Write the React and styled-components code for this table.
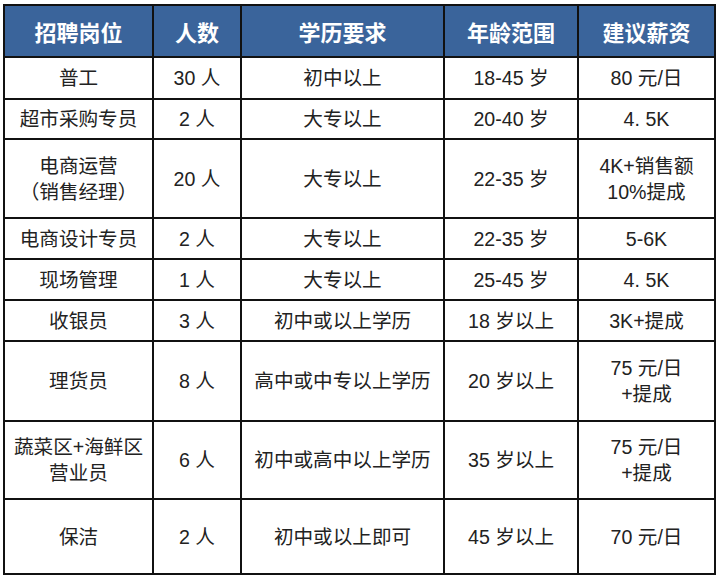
import styled, { createGlobalStyle } from "styled-components";

const GlobalStyle = createGlobalStyle`
  html, body {
    margin: 0;
    padding: 0;
    background: #ffffff;
  }
  body {
    font-family: "Liberation Sans", "Noto Sans CJK SC", sans-serif;
  }
`;

const Page = styled.div`
  padding: 4px 0 0 3px;
`;

const Table = styled.table`
  border-collapse: collapse;
  table-layout: fixed;
  width: 711px;
  color: #222222;
`;

const HeadCell = styled.th`
  background: #3a649b;
  color: #ffffff;
  font-size: 22px;
  font-weight: bold;
  height: 50px;
  padding: 0;
  border: 2px solid #111111;
  text-align: center;
  vertical-align: middle;
`;

const Row = styled.tr`
  height: ${(p) => p.$h}px;
`;

const Cell = styled.td`
  font-size: 19.6px;
  line-height: 26px;
  padding: 0;
  border: 2px solid #111111;
  text-align: center;
  vertical-align: middle;
  white-space: pre-line;
`;

const columns = [
  { title: "招聘岗位", width: 149 },
  { title: "人数", width: 88 },
  { title: "学历要求", width: 203 },
  { title: "年龄范围", width: 134 },
  { title: "建议薪资", width: 137 },
];

const rows = [
  { h: 42, cells: ["普工", "30 人", "初中以上", "18-45 岁", "80 元/日"] },
  { h: 40, cells: ["超市采购专员", "2 人", "大专以上", "20-40 岁", "4. 5K"] },
  { h: 79, cells: ["电商运营\n（销售经理）", "20 人", "大专以上", "22-35 岁", "4K+销售额\n10%提成"] },
  { h: 41, cells: ["电商设计专员", "2 人", "大专以上", "22-35 岁", "5-6K"] },
  { h: 41, cells: ["现场管理", "1 人", "大专以上", "25-45 岁", "4. 5K"] },
  { h: 41, cells: ["收银员", "3 人", "初中或以上学历", "18 岁以上", "3K+提成"] },
  { h: 80, cells: ["理货员", "8 人", "高中或中专以上学历", "20 岁以上", "75 元/日\n+提成"] },
  { h: 78, cells: ["蔬菜区+海鲜区\n营业员", "6 人", "初中或高中以上学历", "35 岁以上", "75 元/日\n+提成"] },
  { h: 75, cells: ["保洁", "2 人", "初中或以上即可", "45 岁以上", "70 元/日"] },
];

export default function App() {
  return (
    <Page>
      <GlobalStyle />
      <Table>
        <colgroup>
          {columns.map((c) => (
            <col key={c.title} style={{ width: c.width }} />
          ))}
        </colgroup>
        <thead>
          <tr>
            {columns.map((c) => (
              <HeadCell key={c.title}>{c.title}</HeadCell>
            ))}
          </tr>
        </thead>
        <tbody>
          {rows.map((r, i) => (
            <Row key={i} $h={r.h}>
              {r.cells.map((text, j) => (
                <Cell key={j}>{text}</Cell>
              ))}
            </Row>
          ))}
        </tbody>
      </Table>
    </Page>
  );
}
